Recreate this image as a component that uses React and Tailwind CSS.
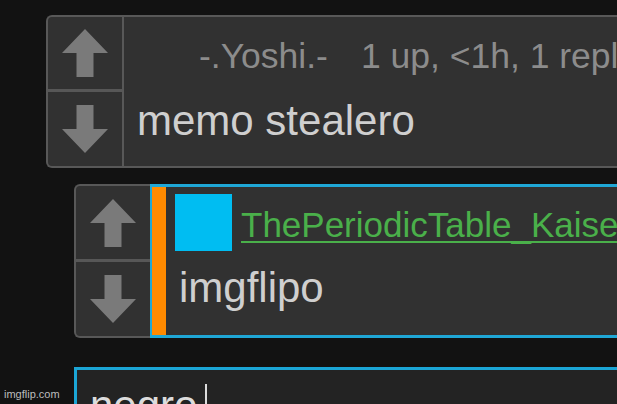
function Arrow({ down }) {
    return (
        <svg width="46" height="48" viewBox="0 0 46 48" className={down ? "rotate-180" : ""}>
            <polygon points="23,0 46,24 31.5,24 31.5,48 14.5,48 14.5,24 0,24" fill="#7a7a7a" />
        </svg>
    );
}

function VoteColumn({ upH, downH }) {
    return (
        <div className="flex w-[74px] flex-col">
            <div className="flex items-center justify-center" style={{ height: upH }}>
                <Arrow />
            </div>
            <div className="h-[3px] bg-[#575757]" />
            <div className="flex items-center justify-center" style={{ height: downH }}>
                <Arrow down />
            </div>
        </div>
    );
}

export default function App() {
    return (
        <div className="relative h-[404px] w-[617px] overflow-hidden bg-[#121212] font-['Liberation_Sans',Arial,sans-serif]">
            <div className="flex flex-col">
                {/* first comment */}
                <div className="ml-[46px] mt-[15px] flex h-[153px] w-[640px] rounded-l-[6px] border-2 border-r-0 border-[#585858] bg-[#313131]">
                    <div className="border-r-2 border-[#585858]">
                        <VoteColumn upH={72} downH={74} />
                    </div>
                    <div className="flex-1 pt-[20px]">
                        <div className="h-[38px] whitespace-nowrap pl-[75px] text-[35.5px] leading-[38px] text-[#8c8c8c]">
                            -.Yoshi.-<span className="ml-[33px]">1 up, &lt;1h, 1 reply</span>
                        </div>
                        <div className="mt-[23px] pl-[13px] text-[42px] leading-[46px] text-[#cfcfcf]">
                            memo stealero
                        </div>
                    </div>
                </div>

                {/* reply */}
                <div className="ml-[74px] mt-[16px] flex h-[154px] w-[600px]">
                    <div className="rounded-l-[6px] border-2 border-r-0 border-[#585858] bg-[#313131]">
                        <VoteColumn upH={73} downH={74} />
                    </div>
                    <div className="flex flex-1 border-2 border-y-[3px] border-[#1fa7d6] bg-[#313131]">
                        <div className="w-[14px] bg-[#ff8a00]" />
                        <div className="flex-1 pl-[9px] pt-[7px]">
                            <div className="flex items-start">
                                <div className="h-[57px] w-[57px] bg-[#00bdf2]" />
                                <div className="ml-[9px] mt-[12px] whitespace-nowrap text-[35px] leading-[38px] text-[#4ab04a] underline decoration-2 underline-offset-[4px]">
                                    ThePeriodicTable_Kaiser
                                </div>
                            </div>
                            <div className="ml-[4px] mt-[14px] text-[42px] leading-[46px] text-[#cfcfcf]">
                                imgflipo
                            </div>
                        </div>
                    </div>
                </div>

                {/* reply box */}
                <div className="ml-[74px] mt-[29px] h-[80px] w-[600px] border-[3px] border-[#1ba5d5] bg-[#232323] pl-[13px] pt-[13px]">
                    <div className="flex items-start text-[42px] leading-[46px] text-[#dcdcdc]">
                        negro
                        <span className="ml-[8px] mt-[1px] h-[38px] w-[2px] bg-[#dcdcdc]" />
                    </div>
                </div>
            </div>

            <div className="absolute bottom-[3px] left-[4px] text-[11px] leading-[13px] text-[#bdbdbd]">
                imgflip.com
            </div>
        </div>
    );
}
